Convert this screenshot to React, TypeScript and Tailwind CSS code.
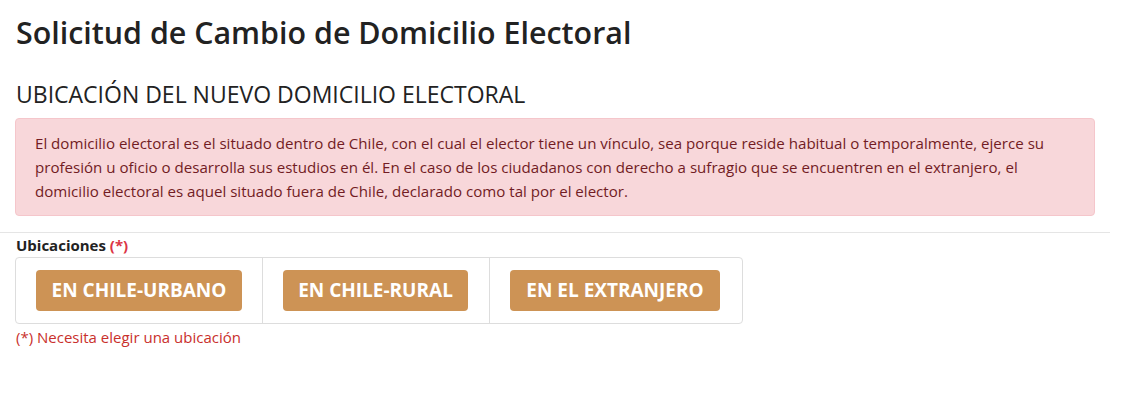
export default function App() {
  const font = { fontFamily: '"Open Sans", "Noto Sans", sans-serif' };
  const buttons = [
    { t: "EN CHILE-URBANO", w: "w-[206px]", p: "pl-[20px] pr-[20px]" },
    { t: "EN CHILE-RURAL", w: "w-[185px]", p: "pl-[20px] pr-[21px]" },
    { t: "EN EL EXTRANJERO", w: "w-[210px]", p: "pl-[20px] pr-[20px]" },
  ];
  return (
    <div className="bg-white w-[1136px] h-[415px] overflow-hidden text-[#212529]" style={font}>
      <div className="pl-[16px] pr-[26px]">
        <h1 className="pt-[14px] text-[30.4px] leading-[38px] font-semibold text-[#222]">
          Solicitud de Cambio de Domicilio Electoral
        </h1>
        <h2 className="mt-[29px] text-[23px] leading-[26px] font-normal text-[#222]">
          UBICACIÓN DEL NUEVO DOMICILIO ELECTORAL
        </h2>
      </div>
      <div className="ml-[15px] mr-[41px] mt-[11px] rounded-[4px] border border-[#f5c6cb] bg-[#f8d7da] px-[19px] py-[12px] text-[15.1px] leading-[24px] text-[#721c24]">
        El domicilio electoral es el situado dentro de Chile, con el cual el elector tiene un vínculo, sea porque reside habitual o temporalmente, ejerce su profesión u oficio o desarrolla sus estudios en él. En el caso de los ciudadanos con derecho a sufragio que se encuentren en el extranjero, el domicilio electoral es aquel situado fuera de Chile, declarado como tal por el elector.
      </div>
      <div className="mt-[16px] mr-[26px] border-t border-[#e5e5e5]" />
      <div className="pl-[16px] pt-[2px] text-[15px] leading-[20px] font-bold text-[#222]">
        Ubicaciones <span className="text-[#dc3545]">(*)</span>
      </div>
      <div className="ml-[15px] mt-[2px] flex w-[728px] rounded-[4px] border border-[#ddd]">
        {buttons.map((b, i) => (
          <div
            key={b.t}
            className={`${b.p} py-[12px] ${i > 0 ? "border-l border-[#ddd]" : ""} ${i === 2 ? "flex-1" : ""}`}
          >
            <button
              className={`${b.w} h-[41px] rounded-[4px] bg-[#cd9355] text-[19px] font-bold text-white whitespace-nowrap`}
            >
              {b.t}
            </button>
          </div>
        ))}
      </div>
      <div className="pl-[16px] pt-[2px] text-[15px] leading-[22px] text-[#c9302c]">
        (*) Necesita elegir una ubicación
      </div>
    </div>
  );
}
